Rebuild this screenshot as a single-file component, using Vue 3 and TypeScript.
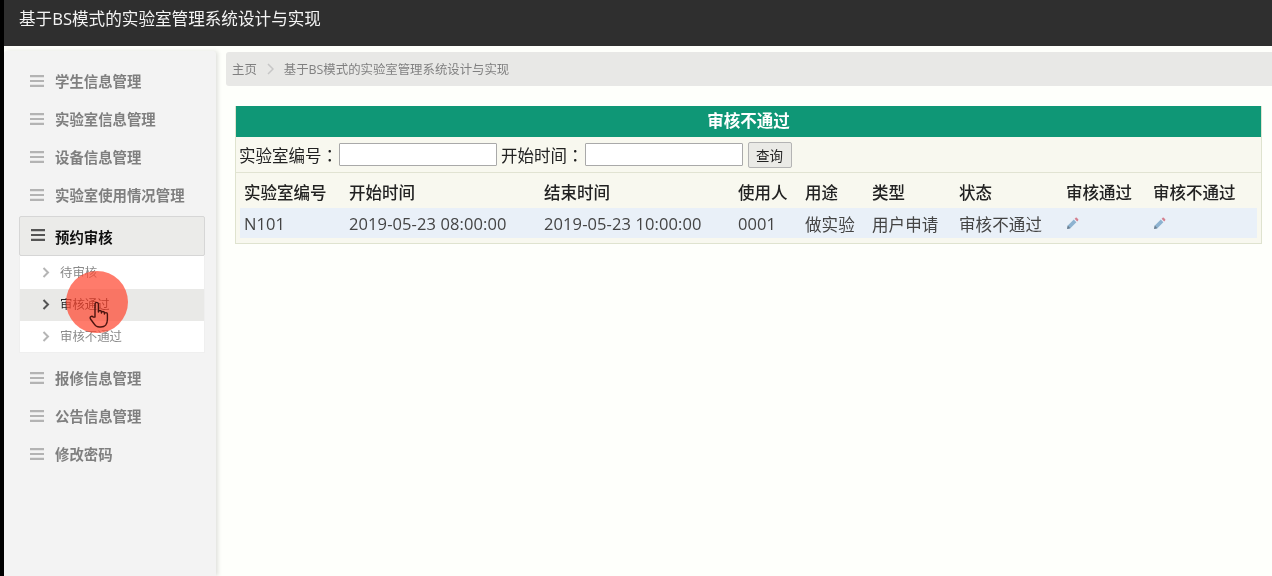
<script setup lang="ts">
interface MenuItem {
  label: string;
}

const topMenu: MenuItem[] = [
  { label: '学生信息管理' },
  { label: '实验室信息管理' },
  { label: '设备信息管理' },
  { label: '实验室使用情况管理' },
];
const bottomMenu: MenuItem[] = [
  { label: '报修信息管理' },
  { label: '公告信息管理' },
  { label: '修改密码' },
];
const subMenu = [
  { label: '待审核', active: false },
  { label: '审核通过', active: true },
  { label: '审核不通过', active: false },
];
const columns = ['实验室编号', '开始时间', '结束时间', '使用人', '用途', '类型', '状态', '审核通过', '审核不通过'];
const row = ['N101', '2019-05-23 08:00:00', '2019-05-23 10:00:00', '0001', '做实验', '用户申请', '审核不通过'];
</script>

<template>
  <div class="page">
    <header class="topbar">基于BS模式的实验室管理系统设计与实现</header>
    <div class="body-wrap">
      <aside class="sidebar">
        <div v-for="item in topMenu" :key="item.label" class="menu-item">
          <svg class="bars" width="14" height="12" viewBox="0 0 14 12"><path d="M0 1.2h14M0 6h14M0 10.8h14" /></svg>
          <span>{{ item.label }}</span>
        </div>
        <div class="menu-item menu-item--open">
          <svg class="bars" width="14" height="12" viewBox="0 0 14 12"><path d="M0 1.2h14M0 6h14M0 10.8h14" /></svg>
          <span>预约审核</span>
        </div>
        <ul class="submenu">
          <li v-for="sub in subMenu" :key="sub.label" :class="{ active: sub.active }">
            <svg class="chev" width="8" height="11" viewBox="0 0 8 11"><path d="M1.5 1l4.5 4.5L1.5 10" /></svg>
            <span>{{ sub.label }}</span>
          </li>
        </ul>
        <div class="bottom-menu">
          <div v-for="item in bottomMenu" :key="item.label" class="menu-item">
            <svg class="bars" width="14" height="12" viewBox="0 0 14 12"><path d="M0 1.2h14M0 6h14M0 10.8h14" /></svg>
            <span>{{ item.label }}</span>
          </div>
        </div>
      </aside>

      <main class="content">
        <div class="crumbs">
          <span>主页</span>
          <svg class="crumb-sep" width="7" height="12" viewBox="0 0 7 12"><path d="M1 1l5 5-5 5" /></svg>
          <span>基于BS模式的实验室管理系统设计与实现</span>
        </div>
        <section class="panel">
          <h2 class="panel-title">审核不通过</h2>
          <div class="search">
            <label>实验室编号<span class="colon">：</span></label>
            <input type="text" />
            <label>开始时间<span class="colon">：</span></label>
            <input type="text" />
            <button type="button">查询</button>
          </div>
          <div class="table">
            <div class="tr tr--head">
              <div v-for="col in columns" :key="col" class="td">{{ col }}</div>
            </div>
            <div class="tr tr--data">
              <div v-for="cell in row" :key="cell + 'c'" class="td">{{ cell }}</div>
              <div v-for="n in 2" :key="n" class="td">
                <svg class="pencil" width="13" height="13" viewBox="0 0 13 13">
                  <path d="M1 12l.8-3.4 6-6 2.6 2.6-6 6z" fill="#8db2d0" />
                  <path d="M8.6 1.8l.9-.9c.4-.4 1-.4 1.4 0l1.2 1.2c.4.4.4 1 0 1.4l-.9.9z" fill="#d4808f" />
                  <path d="M1 12l.8-3.4 2.6 2.6z" fill="#6b7d8e" />
                </svg>
              </div>
            </div>
          </div>
        </section>
      </main>
    </div>

    <div class="click-mark">
      <svg class="hand" width="22" height="30" viewBox="0 0 22 30">
        <path d="M6 17V4.2c0-2.4 3.4-2.4 3.4 0V12c0-2 3-2 3 0v1c0-2 3-2 3 0v1c0-1.8 3-1.8 3 0v5.5c0 4.5-2.500 7.5-6.500 7.5h-1.5c-2.500 0-4-1-5.200-3L1.500 19c-1.200-2.200 1.300-3.700 2.800-1.900z" fill="none" stroke="#4b1410" stroke-width="1.4" stroke-linejoin="round" />
      </svg>
    </div>
  </div>
</template>

<style scoped>
.page {
  position: relative;
  width: 1272px;
  height: 576px;
  overflow: hidden;
  box-sizing: border-box;
  padding-left: 4px;
  background: #fefffb;
  font-family: "Open Sans", "Noto Sans CJK SC", sans-serif;
  filter: blur(0.4px);
}

.page::before {
  content: "";
  position: absolute;
  left: 0;
  top: 0;
  bottom: 0;
  width: 4px;
  background: #000;
}

.topbar {
  height: 46px;
  background: #2f2f2f;
  color: #f4f4f4;
  font-size: 16.6px;
  line-height: 38px;
  padding-left: 15px;
}

.body-wrap {
  display: flex;
  height: 530px;
  padding-top: 5px;
  box-sizing: border-box;
}

.sidebar {
  width: 212px;
  flex: none;
  box-sizing: border-box;
  padding: 12px 11px 0 15px;
  background: #f3f3f3;
  border-radius: 3px 3px 0 0;
  box-shadow: 2px 0 4px rgba(0, 0, 0, 0.12);
}

.menu-item {
  display: flex;
  align-items: center;
  height: 38px;
  padding-left: 11px;
  color: #7f7f7f;
  font-size: 14.4px;
  font-weight: 700;
}

.menu-item span {
  margin-bottom: 3px;
}

.bars {
  flex: none;
  margin-right: 11px;
  margin-top: -3px;
}

.bars path {
  fill: none;
  stroke: #b3b3b3;
  stroke-width: 2.2;
}

.menu-item--open {
  box-sizing: border-box;
  height: 40px;
  margin-top: 1px;
  border: 1px solid #d6d6d6;
  border-radius: 2px;
  background: #ebebe9;
  color: #111;
}

.menu-item--open span {
  margin-bottom: 0;
  margin-left: -1px;
}

.menu-item--open .bars path {
  stroke: #555;
}

.submenu {
  margin: 0;
  padding: 1px 0 0;
  list-style: none;
  height: 97px;
  background: #fff;
  border: 1px solid #efefef;
  border-top: 0;
  box-sizing: border-box;
}

.submenu li {
  display: flex;
  align-items: center;
  height: 32px;
  padding-left: 22px;
  font-size: 12.4px;
  color: #8a8a8a;
}

.submenu li span {
  margin-bottom: 2px;
}

.submenu li.active {
  background: #e9e9e7;
  color: #222;
}

.chev {
  margin-right: 10px;
  margin-bottom: 2px;
}

.chev path {
  fill: none;
  stroke: #b5b5b5;
  stroke-width: 2;
}

.active .chev path {
  stroke: #555;
}

.bottom-menu {
  padding-top: 7px;
}

.content {
  flex: 1;
  min-width: 0;
  padding-left: 10px;
}

.crumbs {
  display: flex;
  align-items: center;
  gap: 10px;
  height: 34px;
  padding-left: 6px;
  margin-top: 1px;
  background: #e8e8e6;
  border-radius: 3px 0 0 3px;
  font-size: 12.4px;
  color: #808080;
}

.crumb-sep path {
  fill: none;
  stroke: #c6c6c6;
  stroke-width: 1.5;
}

.panel {
  width: 1027px;
  margin: 20px 0 0 9px;
  box-sizing: border-box;
  border: 1px solid #dfe3cf;
  border-top: 0;
  background: #f8f8ef;
}

.panel-title {
  margin: 0;
  height: 31px;
  background: #0f9776;
  color: #fff;
  font-size: 16.5px;
  font-weight: 700;
  line-height: 30px;
  text-align: center;
}

.search {
  display: flex;
  align-items: center;
  height: 35px;
  padding: 0 3px;
  border-bottom: 1px solid #e1e3d2;
  font-size: 16.5px;
  color: #222;
}

.colon {
  font-family: "Noto Sans CJK TC", sans-serif;
}

.search input {
  width: 158px;
  height: 23px;
  box-sizing: border-box;
  margin: 0 4px 0 1px;
  padding: 0;
  background: #fff;
  border: 1px solid #a9a9a9;
  border-radius: 1px;
}

.search button {
  width: 44px;
  height: 26px;
  padding: 0;
  margin-left: 1px;
  background: #eaeae6;
  border: 1px solid #b4b4b4;
  border-radius: 2px;
  font-family: inherit;
  font-size: 13.5px;
  color: #222;
}

.table {
  padding: 0 4px 5px 4px;
}

.tr {
  display: grid;
  grid-template-columns: 105px 195px 194px 67px 67px 87px 107px 87px 108px;
}

.tr--head {
  height: 35px;
  align-items: center;
  font-size: 16.5px;
  font-weight: 500;
  color: #222;
}

.tr--head .td {
  padding-top: 3px;
}

.tr--data {
  height: 30px;
  align-items: center;
  background: #e9f0f8;
  font-size: 16.5px;
  letter-spacing: 0.1px;
  color: #444;
}

.tr--data .td {
  padding-top: 1px;
}

.td {
  padding-left: 4px;
  white-space: nowrap;
  display: flex;
  align-items: center;
}

.click-mark {
  position: absolute;
  left: 66px;
  top: 271px;
  width: 62px;
  height: 62px;
  border-radius: 50%;
  background: rgba(255, 72, 50, 0.72);
}

.hand {
  position: absolute;
  left: 23px;
  top: 29px;
}
</style>

<style>
body {
  margin: 0;
}
</style>
